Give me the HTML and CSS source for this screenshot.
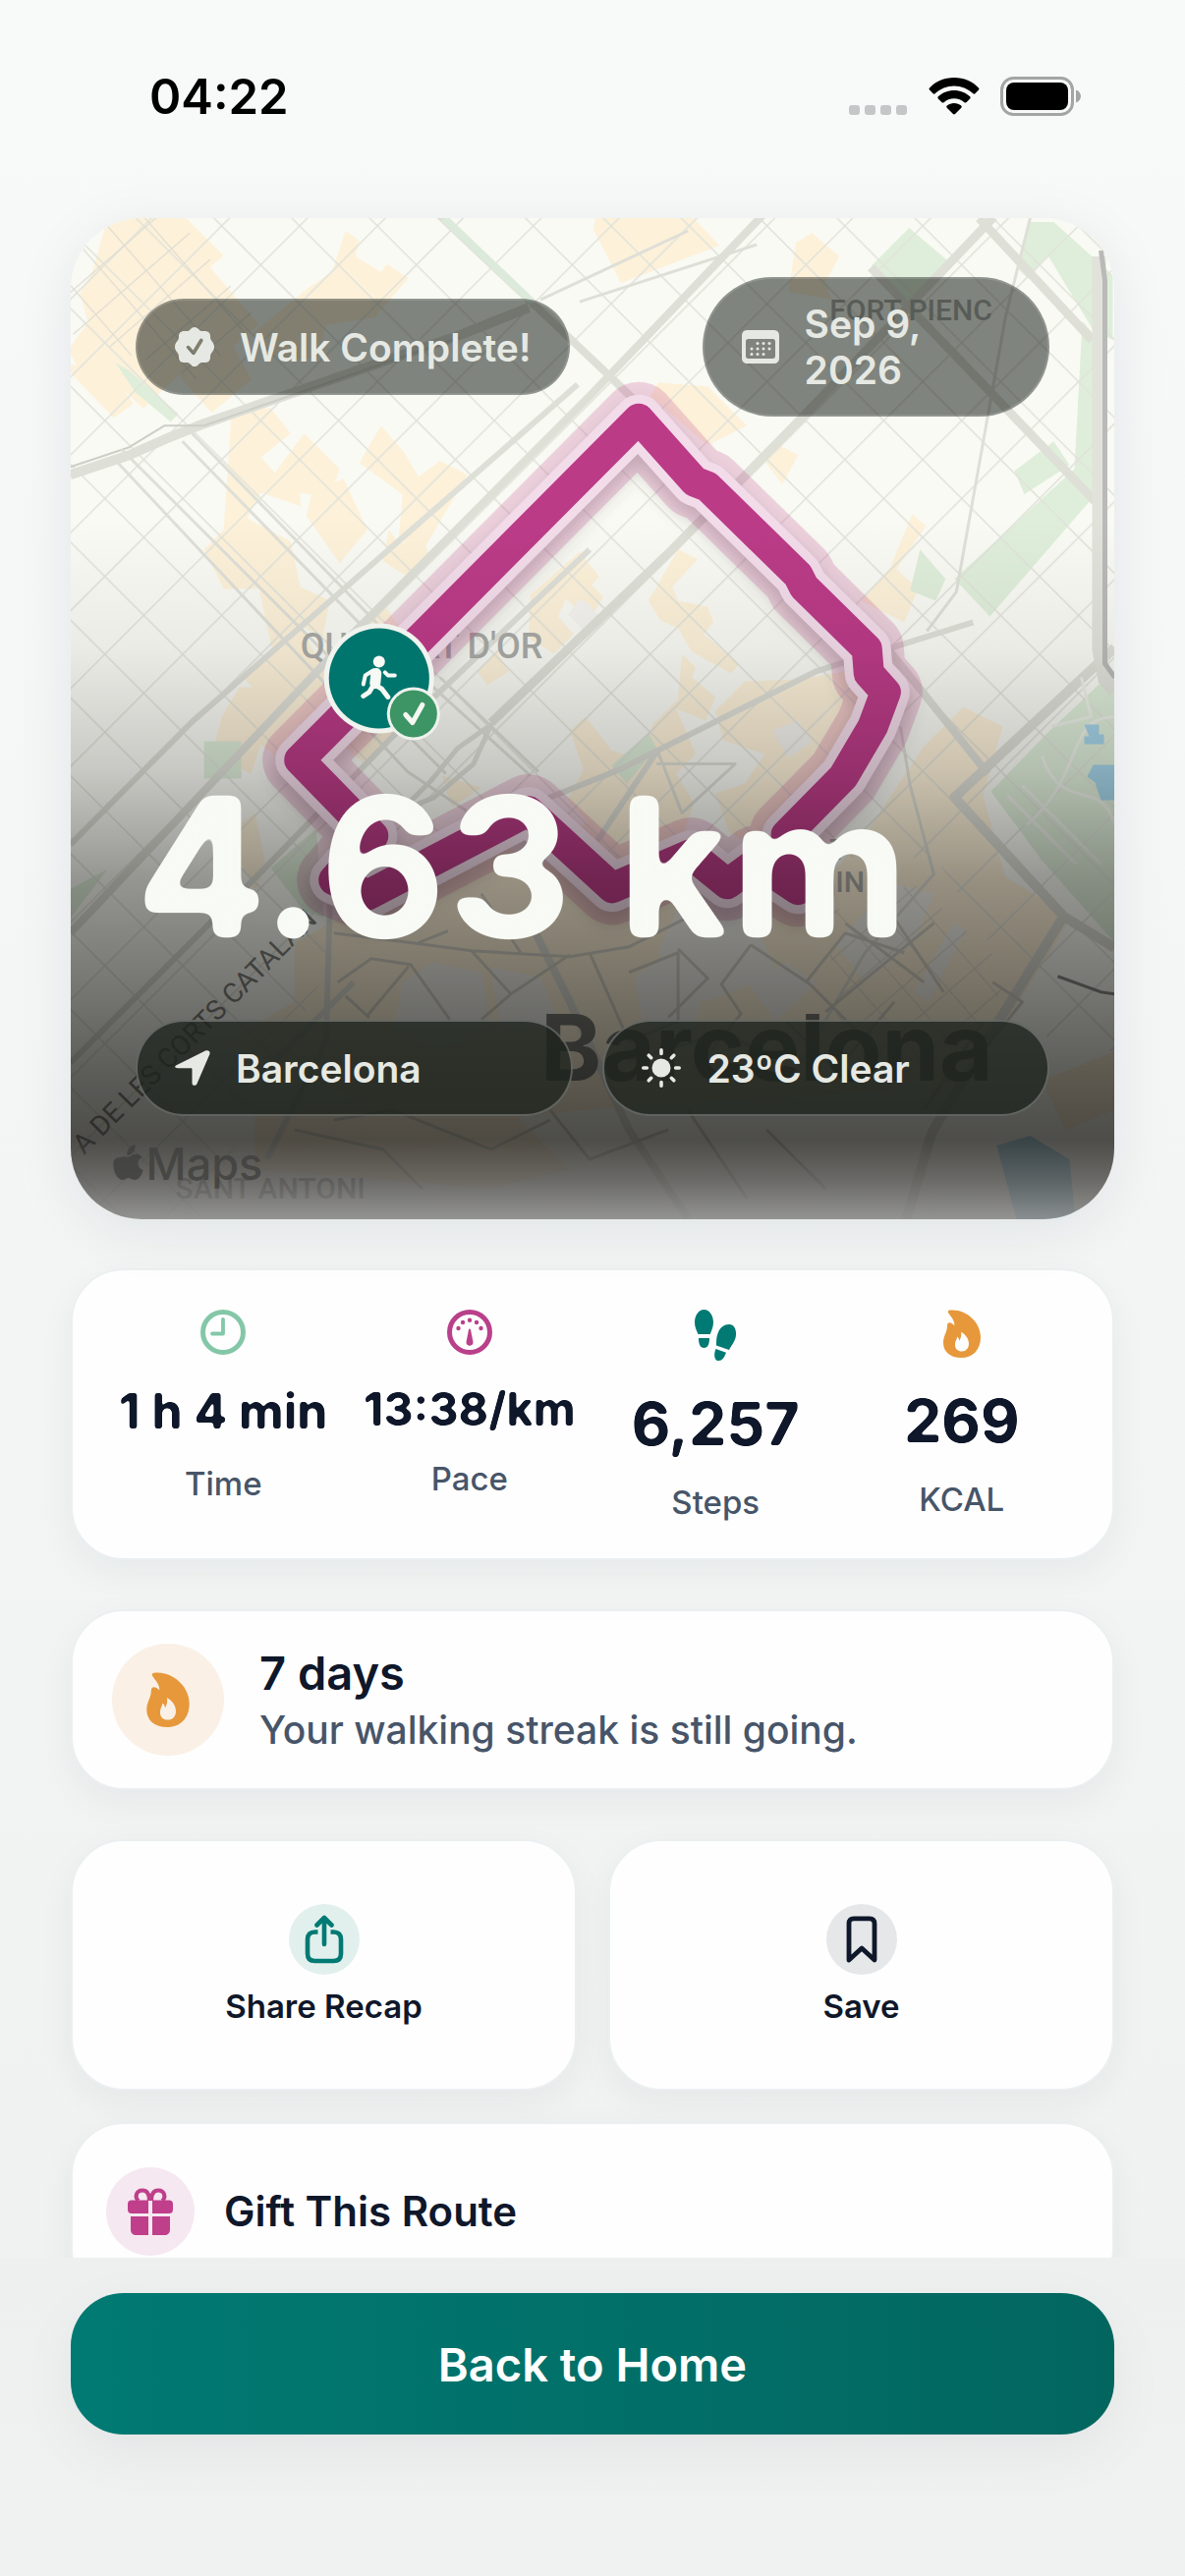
FILE: index.html
```html
<!DOCTYPE html>
<html lang="en">
<head>
    <meta charset="UTF-8">
    <meta name="viewport" content="width=device-width, initial-scale=1.0">
    <title>Walk Complete</title>
    <link rel="stylesheet" href="styles.css">
</head>
<body>
    <div class="app">
        <div class="status-bar">
            <span class="clock">04:22</span>
            <div class="status-icons">
                <svg width="60" height="38" viewBox="0 0 60 38" fill="#c5c6c7">
                    <rect x="0" y="28" width="11" height="10" rx="3"/>
                    <rect x="16" y="28" width="11" height="10" rx="3"/>
                    <rect x="32" y="28" width="11" height="10" rx="3"/>
                    <rect x="48" y="28" width="11" height="10" rx="3"/>
                </svg>
                <svg width="52" height="38" viewBox="0 0 52 38">
                    <path d="M26 0C36 0 45 4 51 10.500c.6.6.6 1.400 0 2l-3.600 3.700c-.6.6-1.400.6-2 0C40 11.400 33.500 8.500 26 8.500S12 11.400 6.600 16.200c-.6.6-1.400.6-2 0L1 12.500c-.6-.6-.6-1.400 0-2C7 4 16 0 26 0z"/>
                    <path d="M26 13c6.300 0 12 2.400 16.200 6.300.6.6.6 1.500 0 2.100l-3.800 3.800c-.6.6-1.400.5-2 0C33.600 22.800 30 21.300 26 21.300s-7.600 1.500-10.400 3.900c-.6.5-1.400.6-2 0l-3.800-3.800c-.6-.6-.6-1.500 0-2.100C14 15.400 19.700 13 26 13z"/>
                    <path d="M26 26c2.800 0 5.300 1 7.200 2.600.7.6.7 1.500.1 2.100l-6.300 6.400c-.6.6-1.400.6-2 0l-6.300-6.400c-.6-.6-.6-1.500.1-2.100C20.700 27 23.200 26 26 26z"/>
                </svg>
                <svg width="83" height="40" viewBox="0 0 83 40">
                    <rect x="1.500" y="1.500" width="72" height="37" rx="12" fill="none" stroke="#a3a4a4" stroke-width="3"/>
                    <rect x="6" y="6" width="63" height="28" rx="8"/>
                    <path d="M77 13.500c3 1.200 5 3.600 5 6.500s-2 5.300-5 6.500z" fill="#a3a4a4"/>
                </svg>
            </div>
        </div>

        <main class="content">
            <section class="map-card">
                <svg class="map" viewBox="72 223 1062 1018" preserveAspectRatio="xMidYMid slice" aria-hidden="true">
                    <defs>
                        <pattern id="grid" width="56" height="56" patternUnits="userSpaceOnUse" patternTransform="translate(622 705) rotate(45)">
                            <path d="M0 0H56M0 0V56" fill="none" stroke="#e0e2da" stroke-width="3"/>
                        </pattern>
                        <pattern id="tight" width="34" height="34" patternUnits="userSpaceOnUse" patternTransform="rotate(49)">
                            <path d="M0 0H34M0 0V34" fill="none" stroke="#dfdcd2" stroke-width="2.500"/>
                        </pattern>
                        <linearGradient id="shade" x1="0" y1="223" x2="0" y2="1241" gradientUnits="userSpaceOnUse">
                            <stop offset="0" stop-color="#000" stop-opacity="0"/>
                            <stop offset=".3" stop-color="#000" stop-opacity="0"/>
                            <stop offset=".43" stop-color="#050503" stop-opacity=".06"/>
                            <stop offset=".55" stop-color="#050503" stop-opacity=".2"/>
                            <stop offset=".66" stop-color="#050503" stop-opacity=".41"/>
                            <stop offset=".77" stop-color="#050503" stop-opacity=".54"/>
                            <stop offset=".86" stop-color="#050503" stop-opacity=".65"/>
                            <stop offset=".92" stop-color="#141310" stop-opacity=".75"/>
                            <stop offset=".96" stop-color="#4a4947" stop-opacity=".82"/>
                            <stop offset="1" stop-color="#868685" stop-opacity=".88"/>
                        </linearGradient>
                        <filter id="soft" x="-20%" y="-20%" width="140%" height="140%">
                            <feGaussianBlur stdDeviation="9"/>
                        </filter>
                        <!-- rounds off the corners of the numerals -->
                        <filter id="round-big" x="-5%" y="-5%" width="110%" height="110%" color-interpolation-filters="sRGB">
                            <feGaussianBlur stdDeviation="6"/>
                            <feComponentTransfer><feFuncA type="linear" slope="14" intercept="-6.200"/></feComponentTransfer>
                        </filter>
                        <filter id="round-small" x="-5%" y="-5%" width="110%" height="110%" color-interpolation-filters="sRGB">
                            <feGaussianBlur stdDeviation="1.700"/>
                            <feComponentTransfer><feFuncA type="linear" slope="5" intercept="-1.900"/></feComponentTransfer>
                        </filter>
                    </defs>

                    <rect x="72" y="223" width="1062" height="1018" fill="#f9faf4"/>

                    <!-- built-up blocks -->
                    <g fill="#fdf1d9">
                        <path d="M110 223h80l38 38-14 12 50 58-26 22 18 34-40 34-34-38-36 34-30-30-24 10-22-40 20-28-8-30 12-20z"/>
                        <path d="M72 372l40 0 24 40-20 14-44-46zM352 236l14 10-4 16 26 16 6-8 22 14-34 40-50 8-8 34-50 0-16-26 56-46 24-16z"/>
                        <path d="M236 420l40-4 20 26-30 24 14 16 30-40 36 36-10 30-30-6 0 14-40-14-14 26 44 24 10 46 30 14-8 40-22-16 30 60 50-40-12-30 20-6 30 46-20 24-30-10 36 56-36 44-70-60-20 10-36-40 30-24-14-66-36 0-20-40 20-20z"/>
                        <path d="M388 434l24 28 14 24 22-16 28 14-46 78-24-14 4-44-44-32zM318 500l32-12 24 52-28 34-34-48zM396 540l10 14 24-6 8 20-26 18-22-14z"/>
                        <path d="M606 223h100l26 28-100 38-28-54zM826 238l28 24-14 26 6 18-44-8 8-50zM670 390l50 4 40 40-40 20-58-50zM790 452l22 12-16 30-18-24z"/>
                        <path d="M928 524l14 12-30 44 22 20-14 34-44-22 30-34z"/>
                        <path d="M540 606l50-44 20 26-8 8 12 12-14 24-24-22-8 18 16 18-20 20-26-16zM486 684l20-20 12 20-22 14z"/>
                        <path d="M690 560l20 10-26 28 6 14 30 6 6 16-10 12 36 30-8 10-40-22-14-24-18-8-12-20zM694 666l14 14-4 10 24 20-10 24-30-12 20 46-20 20 18 30-10 30-30 14-38 70-46-86 16-8-20-24 16-30-14-40 16-14 26 34 30 10 12-36 26-26z"/>
                        <path d="M814 692l56-10 22 30-40 96-70 60-40-20-14-40 30-10 20-30-42-14-8-30 30-30zM450 790l40 12-30 20z"/>
                        <path d="M244 700l38 0 18 20 40-6-6 20-30 4-20 34-18-14-10 30-40-18 10-40zM230 850l30-22 10 50-10 30zM300 960l90-50 120-50 120 50 190 10 60-70 60-90 40-40 40 20-20 70 30 110-50 70-10 90-60 30-320 20-160 20-200-90 70-40z"/>
                        <path d="M970 860l120 74-60 96-80 90-30-100zM260 1130h260l60 60-80 20-240-20zM1060 1100l74-30v60l-50 20z"/>
                    </g>

                    <!-- open ground inside the old town -->
                    <g fill="#f4f3ef">
                        <path d="M440 980l50 10 10 60-60 20-40-20 10-50zM700 900l60 20 30 70-70 30-50-50zM500 985l50 10 20 50-60 6zM850 960l60-60 40 10-20 50-50 40zM930 1010l40-70 12 8-38 72z"/>
                        <path d="M590 610l10 6 16 20-18 10-20-20zM786 744l26-10 14 22-24 16zM700 960l20 30-14 60-50 4-10-60zM760 1000l40-20 30 20-40 40z"/>
                    </g>

                    <!-- parks -->
                    <g fill="#dfeeda">
                        <path d="M925 233l40 34-40 40-38-36zM1048 227h24l60 54v66l-20-10-46-76-20 24-10-10zM1032 480l40-30 16 24-46 30zM971 590l122-112 8-150 18 20-8 160-104 120zM936 560l26 30-10 22-26-10z"/>
                        <path d="M1134 682l-68 64-58 60 52 70 74 84zM208 755h38v38h-38zM276 884l46-40 8 90-20-6zM72 905l38-20-38 50zM660 746l8 16-30 36-16-18zM118 370l14 8 50 44-8 8-36-30z"/>
                    </g>

                    <rect x="72" y="223" width="1062" height="650" fill="url(#grid)"/>
                    <path d="M72 870h230l60 60-160 310H72zM950 870h184v200h-60z" fill="url(#grid)"/>
                    <path d="M72 223h110l80 104-60 60L72 340z" fill="url(#tight)"/>
                    <path d="M840 930l90-30 100 90-60 100-110 20z" fill="url(#tight)"/>

                    <!-- main streets -->
                    <g fill="none" stroke="#dedfd7" stroke-linejoin="round">
                        <path d="M72 484l60-20 36-16 40-16 260-90 70-28" stroke-width="10"/>
                        <path d="M72 476l60-20 36-22 40 0 260-90" stroke="#cdcec6" stroke-width="2"/>
                        <path d="M445 218l104 98 76 72 260 250 120 150" stroke-width="8"/>
                        <path d="M452 223l90 86" stroke="#dceadb" stroke-width="8"/>
                        <path d="M778 218L600 404 350 655 72 950" stroke-width="8"/>
                        <path d="M1011 222L814 428 680 564 500 736" stroke-width="9"/>
                        <path d="M500 738l-34 24-28 34-30 30 34-14 40-34z" stroke-width="5"/>
                        <path d="M996 223l115 124M886 273l228 238" stroke-width="9"/>
                        <path d="M588 392L196 735 72 860" stroke-width="6"/>
                        <path d="M600 560L400 750 270 884 72 1082" stroke-width="6"/>
                        <path d="M550 816l80-32 200-100 160-50M668 766l-60 90M336 920l-4 140-60 120M360 1000l-100 100" stroke-width="6"/>
                        <path d="M540 940l40 80 60 130 60 90" stroke-width="8"/>
                        <path d="M1134 660L971 812l111 121 52 32M1082 933l-62 100-72 120-26 88" stroke-width="10"/>
                        <path d="M916 740l10 60 24 90-70 80-70 120M668 778h80l-54 50-26-66" stroke-width="3"/>
                        <path d="M115 466l300 320 60 40M124 458l330 330M430 690l110 100M448 690l100 96" stroke-width="3"/>
                        <path d="M196 442l220 226M186 450l220 226M700 236l-150 70M770 250l-180 58M1048 223l-25 100-50 280-30 40" stroke-width="3"/>
                    </g>
                    <g fill="none" stroke="#d3d1c6" stroke-width="3">
                        <path d="M340 950l80 10 60 8 100 6 60-10 60-30M426 960l30-12M480 968l40 44-30 26M344 1000l34-24 40 6 40 56M374 1034l42-50M352 1014l24 22M530 970l-40-60M520 1012l60-40M600 970l40 90 50-20 0-70-50 20"/>
                        <path d="M690 966l30 30-40 40M764 962l-30 40 20 30-40 50M764 962l60 40 50 50M820 1000l40-50 60 20M840 1030l110-90M860 940l80 60M900 920l60 90M800 1040l50 50 60-70M640 1080l100-30 60 40M1010 1000l30 20-40 50"/>
                        <path d="M300 1150l90 20 40 40M340 1140l60-10 100 40 60-30M560 1130l40 50 80-30M780 1150l60 60M700 1130l60 90M940 1130l60-90"/>
                    </g>
                    <g fill="none" stroke="#eef1ea" stroke-width="3">
                        <path d="M1134 730c-50 0-30 60-90 110M1025 810l70 70M1040 800l80 80M1060 770c20 60 60 20 74 70M1100 690l10 40-40 10"/>
                    </g>
                    <path d="M1118 262v400l6 30 10 12" fill="none" stroke="#e1e2da" stroke-width="14"/>
                    <path d="M1120 256l4 30v390l10 14" fill="none" stroke="#b9bab8" stroke-width="5"/>
                    <path d="M1076 994l44 16 14 2" fill="none" stroke="#8a8986" stroke-width="3"/>
                    <g fill="#a5d5ea">
                        <path d="M1103 738h15v10h5v10h-20v-8h5zM1112 779h22v36l-14 0-6-18-8-6z"/>
                        <path d="M1014 1166l34-10 40 24 6 61h-60z"/>
                    </g>

                    <!-- place names -->
                    <g class="places">
                        <text x="306" y="671" font-size="36">QUADRAT D'OR</text>
                        <text x="844" y="327" font-size="30">FORT PIENC</text>
                        <text x="844" y="875" font-size="30">T</text>
                        <text x="850" y="908" font-size="30">IN</text>
                        <text x="179" y="1220" font-size="30">SANT ANTONI</text>
                        <text class="avenue" transform="translate(86 1176) rotate(-45)" font-size="28">A DE LES CORTS CATALAN</text>
                        <text class="city" x="550" y="1100" font-size="94">Barcelona</text>
                    </g>

                    <!-- walked route -->
                    <defs>
                        <path id="route" d="M305 774L650 427L707 491L720 496L812 586L818 598L882 661L884 686L901 705L888 740L858 791L800 850L812 906L770 878L740 900L703 870L623 904L538 826L375 911L340 896L380 851Z"/>
                    </defs>
                    <g fill="none" stroke-linejoin="round">
                        <use href="#route" stroke="#55504f" stroke-opacity=".3" stroke-width="52" filter="url(#soft)" transform="translate(0 10)"/>
                        <use href="#route" stroke="#c2448d" stroke-opacity=".22" stroke-width="75"/>
                        <use href="#route" stroke="#f3dcea" stroke-width="49"/>
                        <use href="#route" stroke="#bb3b87" stroke-width="31"/>
                    </g>

                    <rect x="72" y="223" width="1062" height="1018" fill="url(#shade)"/>

                    <!-- finish marker -->
                    <circle cx="386" cy="691" r="56" fill="#f1f3ee"/>
                    <circle cx="386" cy="691" r="51" fill="#00756e"/>
                    <g fill="none" stroke="#f7f9f5" stroke-linecap="round" stroke-linejoin="round">
                        <circle cx="386" cy="674" r="6" fill="#f7f9f5" stroke="none"/>
                        <path d="M383 686l-1 10" stroke-width="11"/>
                        <path d="M380 683l-8 5-2 9" stroke-width="4"/>
                        <path d="M392 685l3 3h7" stroke-width="4"/>
                        <path d="M381 697l8 5 6 8M379 700l-3 5-6 4" stroke-width="5"/>
                    </g>
                    <circle cx="421" cy="727" r="27" fill="#eef2ec"/>
                    <circle cx="421" cy="727" r="24" fill="#3d9464"/>
                    <path d="M413 728l7 8 10-18" fill="none" stroke="#f4f7f2" stroke-width="5" stroke-linecap="round" stroke-linejoin="round"/>

                    <!-- map credit -->
                    <g class="credit">
                        <path d="M138 1165c-5 1-9 5-8 11 5 0 9-6 8-11zM123 1178c-5 0-8 3-7 9 0 7 5 14 9 14 3 0 4-2 6-2s4 2 7 2c4 0 7-6 8-10-6-2-7-10-1-13-2-4-9-4-12-1-3 2-6-1-10 1z"/>
                        <text x="149" y="1201" font-size="45">Maps</text>
                    </g>
                </svg>

                <div class="map-overlay">
                    <div class="map-top">
                        <div class="pill">
                            <svg width="40" height="40" viewBox="0 0 40 40">
                                <path fill="currentColor" fill-rule="evenodd" d="M20 0c2 0 3 1 4.500 2.600 1.500 1.500 2.500 1.600 4.500 1.400 4-.3 6.800 1 7 5 .1 2 0 3.500 1.400 5S40 17.500 40 20s-1 4-2.600 6c-1.400 1.500-1.300 3-1.400 5-.2 4-3 5.300-7 5-2-.2-3 0-4.500 1.400C23 39 22 40 20 40s-3-1-4.500-2.600C14 36 13 35.800 11 36c-4 .3-6.800-1-7-5-.1-2 0-3.500-1.400-5C1 24 0 22.500 0 20s1-4.500 2.600-6C4 12.500 3.900 11 4 9c.2-4 3-5.300 7-5 2 .2 3 .1 4.500-1.400C17 1 18 0 20 0zM25.200 12.500L18.500 23.500l-3.700-4.200c-1.800-1.800-4.200.4-2.600 2.300l5.200 6c1 1 2.400.9 3.200-.3l7.800-12.700c1.200-2.300-1.800-4.200-3.200-2.100z"/>
                            </svg>
                            <span>Walk Complete!</span>
                        </div>
                        <div class="pill pill-date">
                            <svg width="38" height="34" viewBox="0 0 38 34">
                                <path fill="currentColor" fill-rule="evenodd" d="M6 0h26c4 0 6 2 6 6v22c0 4-2 6-6 6H6c-4 0-6-2-6-6V6c0-4 2-6 6-6zM6.500 9C5 9 4 10 4 11.500v15C4 28 5 29 6.500 29h25c1.500 0 2.500-1 2.500-2.500v-15C34 10 33 9 31.500 9z"/>
                                <g fill="currentColor">
                                    <circle cx="16" cy="13.500" r="1.500"/><circle cx="22" cy="13.500" r="1.500"/><circle cx="28" cy="13.500" r="1.500"/>
                                    <circle cx="10" cy="19" r="1.500"/><circle cx="16" cy="19" r="1.500"/><circle cx="22" cy="19" r="1.500"/><circle cx="28" cy="19" r="1.500"/>
                                    <circle cx="10" cy="24.500" r="1.500"/><circle cx="16" cy="24.500" r="1.500"/><circle cx="22" cy="24.500" r="1.500"/>
                                </g>
                            </svg>
                            <span>Sep 9,<br>2026</span>
                        </div>
                    </div>

                    <div class="map-bottom">
                        <h1 class="distance">4.63 km</h1>
                        <div class="chips">
                            <div class="pill pill-dark">
                                <svg width="36" height="36" viewBox="0 0 36 36">
                                    <path fill="currentColor" d="M2 15L31 .6c3-1.400 5.500.6 4.300 3.700L22.500 34c-1.200 2.800-5 2.400-5-.8V19.500c0-.8-.4-1.200-1.200-1.200H3c-3.200 0-4-2-1-3.300z"/>
                                </svg>
                                <span>Barcelona</span>
                            </div>
                            <div class="pill pill-dark">
                                <svg width="40" height="40" viewBox="0 0 40 40">
                                    <circle cx="20" cy="20" r="9.500" fill="currentColor"/>
                                    <path d="M20 1.800v3.600M20 34.600v3.600M1.800 20h3.600M34.600 20h3.600M7.200 7.200l2.500 2.500M30.300 30.300l2.500 2.500M7.200 32.800l2.500-2.500M30.300 9.700l2.500-2.500" stroke="currentColor" stroke-width="3.600" stroke-linecap="round"/>
                                </svg>
                                <span>23ºC Clear</span>
                            </div>
                        </div>
                    </div>
                </div>
            </section>

            <section class="card stats">
                <div class="stat">
                    <svg width="46" height="46" viewBox="0 0 46 46" fill="none" stroke="#84c7a8" stroke-linecap="round" stroke-linejoin="round">
                        <circle cx="23" cy="23" r="20.500" stroke-width="5"/>
                        <path d="M23 10v14.500H12" stroke-width="3.800"/>
                    </svg>
                    <span class="value">1 h 4 min</span>
                    <span class="label">Time</span>
                </div>
                <div class="stat">
                    <svg width="46" height="46" viewBox="0 0 46 46">
                        <circle cx="23" cy="23" r="20.500" fill="none" stroke="#b9408a" stroke-width="5"/>
                        <g fill="#b9408a">
                            <circle cx="11.500" cy="19" r="2.200"/><circle cx="16" cy="13" r="2.200"/><circle cx="23" cy="10.800" r="2.200"/>
                            <circle cx="30" cy="13" r="2.200"/><circle cx="34.500" cy="19" r="2.200"/>
                            <path d="M22 20.500c.3-1.400 1.700-1.400 2 0L26.500 33c.3 5-7.300 5-7 0z"/>
                        </g>
                    </svg>
                    <span class="value value-small">13:38/km</span>
                    <span class="label">Pace</span>
                </div>
                <div class="stat">
                    <svg width="42" height="52" viewBox="0 0 42 52" fill="#007a73">
                        <path d="M9.500 0C15 0 19 6 19 13c0 5-2 8-3.200 12H3.500C2 21 0 18 0 13 0 6 4 0 9.500 0zM4 29h11c0 6-1.500 10-5.500 10S4 35 4 29z"/>
                        <path d="M35 15c5 0 7.500 5 7 11-.5 6-4.500 10-7 15l-13-4.500c0-5 0-9 2-13.500C26 18 30 15 35 15zM21.500 40l10.500 3.800C30 49 28 52 24.500 52 20 52 19 46 21.500 40z"/>
                    </svg>
                    <span class="value value-big">6,257</span>
                    <span class="label">Steps</span>
                </div>
                <div class="stat">
                    <svg width="38" height="49" viewBox="0 0 38 49">
                        <path fill="#e6983b" fill-rule="evenodd" d="M6.500.6C22-1.500 38 12 38 28c0 13-8 21-19.500 21C7 49 0 43 0 33.500c0-7 4-10.500 4-17 0-4 3.500-4.500 7.400-.3C11.400 10 8 8 5.200 3.500 4.400 2 5 .8 6.500.6zM18 22.800c.8 4-.3 6.200-1.500 9-.4-1.800-1-3-2.300-4.300-1 4.500-2.200 4.500-2.200 8.500 0 4.300 3 6.500 7 6.500s7-3.200 7-7.500c0-5-3-9.500-8-12.200z"/>
                    </svg>
                    <span class="value value-big">269</span>
                    <span class="label">KCAL</span>
                </div>
            </section>

            <section class="card streak">
                <div class="badge badge-orange">
                    <svg width="44" height="56" viewBox="0 0 38 49">
                        <path fill="#e6983b" fill-rule="evenodd" d="M6.500.6C22-1.500 38 12 38 28c0 13-8 21-19.500 21C7 49 0 43 0 33.500c0-7 4-10.500 4-17 0-4 3.500-4.500 7.400-.3C11.400 10 8 8 5.200 3.500 4.400 2 5 .8 6.500.6zM18 22.800c.8 4-.3 6.200-1.500 9-.4-1.800-1-3-2.300-4.300-1 4.500-2.200 4.500-2.200 8.500 0 4.300 3 6.500 7 6.500s7-3.200 7-7.500c0-5-3-9.500-8-12.200z"/>
                    </svg>
                </div>
                <div>
                    <h2 class="streak-title">7 days</h2>
                    <p class="streak-text">Your walking streak is still going.</p>
                </div>
            </section>

            <div class="actions">
                <button class="card action" type="button">
                    <span class="badge badge-teal">
                        <svg width="40" height="50" viewBox="0 0 40 50" fill="none" stroke="#007a73" stroke-width="4.600" stroke-linecap="round" stroke-linejoin="round">
                            <path d="M20 30V3M12.500 10.500L20 3l7.500 7.500"/>
                            <path d="M13.500 17.500h-3c-5 0-7.500 2.500-7.500 7.500v14.500c0 5 2.500 7.500 7.500 7.500h19c5 0 7.500-2.500 7.500-7.500V25c0-5-2.500-7.500-7.500-7.500h-3" stroke-linecap="butt"/>
                        </svg>
                    </span>
                    Share Recap
                </button>
                <button class="card action" type="button">
                    <span class="badge badge-navy">
                        <svg width="32" height="48" viewBox="0 0 32 48" fill="none" stroke="#0f172a" stroke-width="4.800" stroke-linejoin="round">
                            <path d="M3 45V8c0-3.500 1.700-5.200 5-5.200h16c3.300 0 5 1.700 5 5.200v37L16 33z"/>
                        </svg>
                    </span>
                    Save
                </button>
                <button class="card gift" type="button">
                    <span class="badge badge-pink">
                        <svg width="46" height="48" viewBox="0 0 46 48">
                            <g fill="#bf3f8b">
                                <path d="M4 12.500h17V26H4c-2.700 0-4-1.300-4-4v-5.500c0-2.700 1.300-4 4-4zM25 12.500h17c2.700 0 4 1.300 4 4V22c0 2.700-1.300 4-4 4H25z"/>
                                <path d="M3 29h18v19H9c-4 0-6-2-6-6zM25 29h18v13c0 4-2 6-6 6H25z"/>
                            </g>
                            <path d="M22 13c0-7-2.500-10.500-7-10.500C8 2.500 7 10 11 13M24 13c0-7 2.500-10.500 7-10.500 7 0 8 7.500 4 10.500" fill="none" stroke="#bf3f8b" stroke-width="4"/>
                        </svg>
                    </span>
                    Gift This Route
                </button>
            </div>
        </main>

        <footer class="footer">
            <button class="home-button" type="button">Back to Home</button>
        </footer>
    </div>
</body>
</html>
```
FILE: styles.css
```css
:root {
    --ink: #0f172a;
    --muted: #475569;
    --teal: #007a73;
    --teal-dark: #02665f;
    --border: #eceff1;
}
* {
    box-sizing: border-box;
}
body {
    margin: 0;
    overflow: hidden;
    font-family: Inter, "Liberation Sans", sans-serif;
    color: var(--ink);
    background: linear-gradient(#f8f9f9, #f3f5f5 50%, #eff1f0);
}
h1, h2, p {
    margin: 0;
}
button {
    font-family: inherit;
    color: inherit;
    cursor: pointer;
}
svg {
    flex: none;
    display: block;
}
.app {
    height: 100vh;
    display: flex;
    flex-direction: column;
}

/* status bar */
.status-bar {
    display: flex;
    flex: none;
    justify-content: space-between;
    align-items: center;
    height: 222px;
    padding: 0 105px 26px 152px;
}
.clock {
    font-size: 49px;
    font-weight: 600;
    color: #000;
}
.status-icons {
    display: flex;
    align-items: center;
    gap: 21px;
}

.content {
    flex: 1;
    min-height: 0;
    padding: 0 72px;
    display: flex;
    flex-direction: column;
    gap: 50px;
}
.content > * {
    flex: none;
}

/* map */
.map-card {
    position: relative;
    aspect-ratio: 1062 / 1019;
    border-radius: 72px;
    overflow: hidden;
    box-shadow: 0 12px 60px rgba(15, 23, 42, 0.08);
}
.map {
    position: absolute;
    width: 100%;
    height: 100%;
}
.places text {
    font-family: Roboto, sans-serif;
    font-weight: 500;
    fill: #a9aaa6;
}
.places .avenue {
    font-weight: 400;
    fill: #7d7e7a;
}
.places .city {
    font-family: Inter, sans-serif;
    font-weight: 700;
    fill: #777874;
}
.credit {
    fill: #3f3f3d;
    fill-opacity: 0.8;
}
.credit text {
    font-family: Inter, sans-serif;
    font-weight: 500;
}
.map-overlay {
    position: absolute;
    inset: 0;
    padding: 60px 66px 105px;
    display: flex;
    flex-direction: column;
    justify-content: space-between;
}
.map-top {
    display: flex;
    justify-content: space-between;
    align-items: center;
}
.pill {
    display: flex;
    align-items: center;
    gap: 26px;
    min-height: 98px;
    padding: 22px 38px;
    border: 2px solid rgba(255, 255, 255, 0.14);
    border-radius: 72px;
    background: rgba(8, 14, 8, 0.5);
    color: #e6e9e3;
    font-size: 39px;
    line-height: 47px;
    font-weight: 600;
}
.pill-date {
    flex: 0 1 38%;
}
.pill-dark {
    border-color: rgba(255, 255, 255, 0.26);
    background: rgba(30, 36, 30, 0.78);
}
.distance {
    color: #f8faf5;
    font-size: 198px;
    line-height: 216px;
    font-weight: 700;
    white-space: nowrap;
    filter: url(#round-big);
}
.chips {
    display: grid;
    grid-template-columns: 49fr 50fr;
    gap: 30px;
    margin-top: 48px;
}

/* cards */
.card {
    border: 2px solid var(--border);
    border-radius: 54px;
    background: #fefefe;
    box-shadow: 0 12px 36px rgba(15, 40, 35, 0.05);
}
.stats {
    display: grid;
    grid-template-columns: repeat(4, minmax(0, 1fr));
    gap: 36px;
    padding: 40px 46px 37px;
}
.stat {
    display: flex;
    flex-direction: column;
    align-items: center;
}
.value {
    margin: 28px 0 24px;
    font-size: 50px;
    line-height: 59px;
    font-weight: 700;
    white-space: nowrap;
    filter: url(#round-small);
}
.value-small {
    font-size: 47px;
    line-height: 54px;
}
.value-big {
    font-size: 61px;
    line-height: 72px;
}
.label {
    color: var(--muted);
    font-size: 33px;
    line-height: 40px;
    font-weight: 500;
}

.badge {
    flex: none;
    display: flex;
    align-items: center;
    justify-content: center;
    border-radius: 50%;
}
.badge-orange {
    width: 114px;
    height: 114px;
    background: #faf0e6;
}
.badge-teal {
    width: 72px;
    height: 72px;
    background: #e2f0ed;
}
.badge-navy {
    width: 72px;
    height: 72px;
    background: #e5e7e9;
}
.badge-pink {
    width: 90px;
    height: 90px;
    background: #f6e8f0;
}

.streak {
    display: flex;
    align-items: center;
    gap: 36px;
    padding: 33px 40px;
}
.streak-title {
    font-size: 47px;
    line-height: 58px;
    font-weight: 600;
}
.streak-text {
    color: var(--muted);
    font-size: 39px;
    line-height: 50px;
    margin-top: 4px;
    font-weight: 500;
}

.actions {
    display: grid;
    grid-template-columns: 1fr 1fr;
    gap: 32px;
}
.action {
    display: flex;
    flex-direction: column;
    align-items: center;
    justify-content: center;
    gap: 12px;
    padding: 64px 24px;
    font-size: 33px;
    line-height: 40px;
    font-weight: 600;
}
.gift {
    grid-column: 1 / -1;
    display: flex;
    align-items: center;
    gap: 30px;
    padding: 44px 34px;
    font-size: 42px;
    line-height: 48px;
    font-weight: 600;
}

.footer {
    position: relative;
    flex: none;
    padding: 36px 72px 144px;
    background: linear-gradient(#eeefef, #f0f2f1);
}
.home-button {
    width: 100%;
    height: 144px;
    border: none;
    border-radius: 54px;
    background: linear-gradient(to right, var(--teal), var(--teal-dark));
    color: #fff;
    font-size: 47px;
    font-weight: 600;
    box-shadow: 0 18px 60px rgba(15, 23, 42, 0.05);
}
```
